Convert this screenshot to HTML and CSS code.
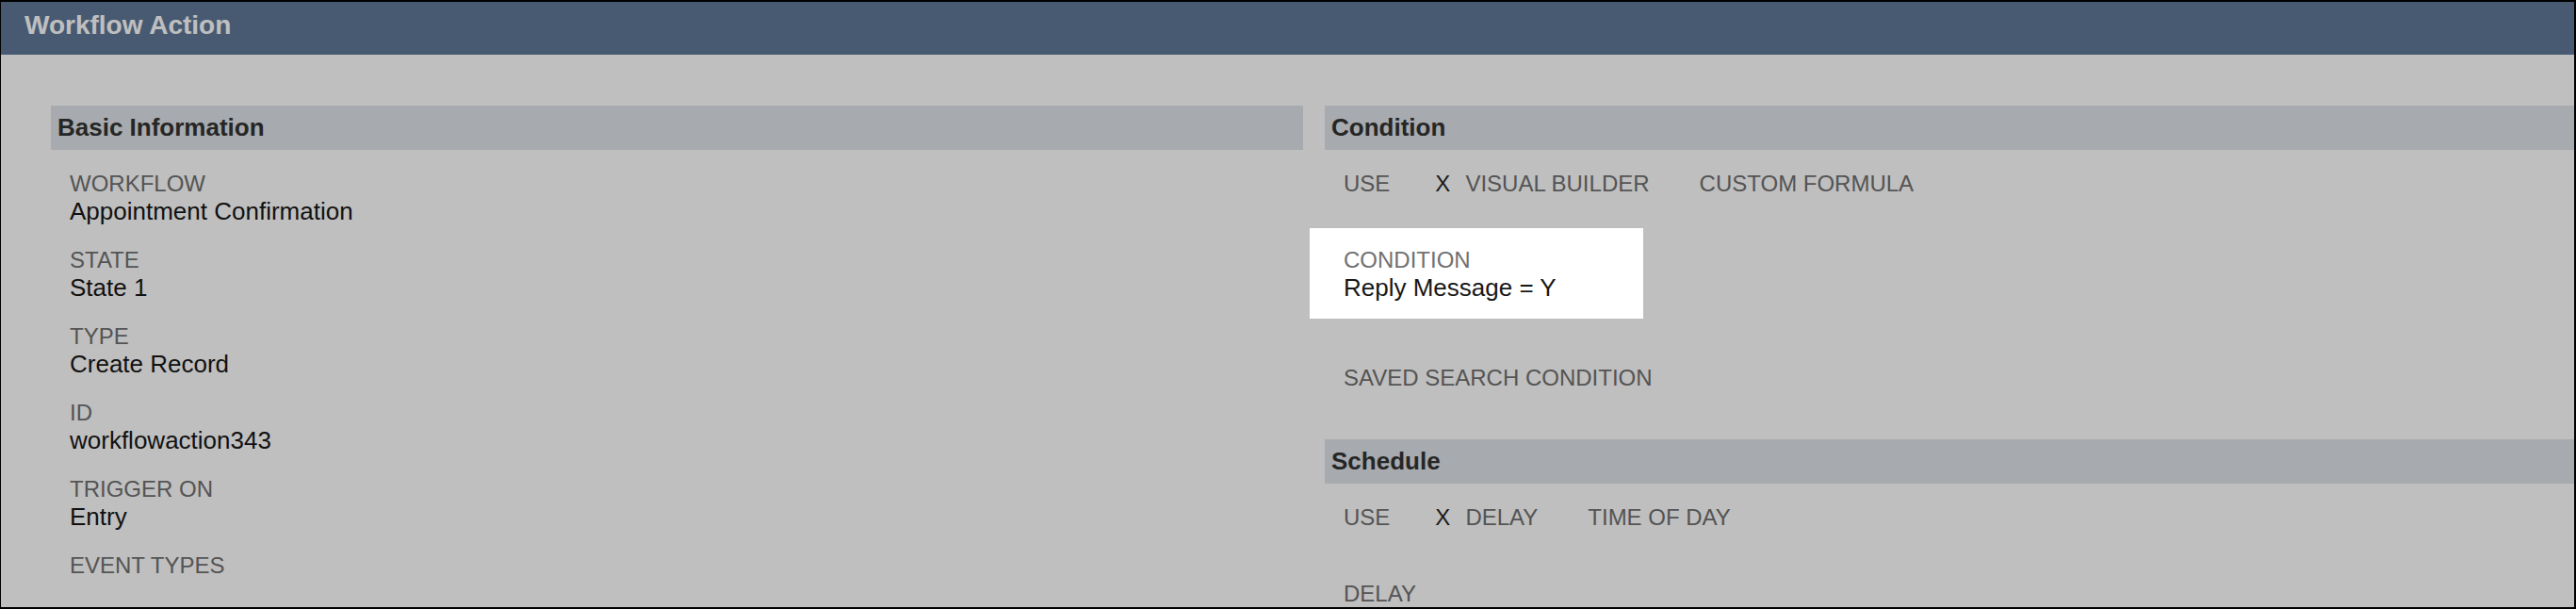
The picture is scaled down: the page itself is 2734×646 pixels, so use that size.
FILE: index.html
```html
<!DOCTYPE html>
<html lang="en">
<head>
    <meta charset="UTF-8">
    <meta name="viewport" content="width=device-width, initial-scale=1.0">
    <title>Workflow Action</title>
    <link rel="stylesheet" href="styles.css">
</head>
<body>
    <div class="frame">
        <div class="page-header">
            <h1>Workflow Action</h1>
        </div>

        <div class="columns">
            <section class="panel">
                <h2 class="panel-title">Basic Information</h2>
                <div class="fields">
                    <div class="field">
                        <div class="label">WORKFLOW</div>
                        <div class="value">Appointment Confirmation</div>
                    </div>
                    <div class="field">
                        <div class="label">STATE</div>
                        <div class="value">State 1</div>
                    </div>
                    <div class="field">
                        <div class="label">TYPE</div>
                        <div class="value">Create Record</div>
                    </div>
                    <div class="field">
                        <div class="label">ID</div>
                        <div class="value">workflowaction343</div>
                    </div>
                    <div class="field">
                        <div class="label">TRIGGER ON</div>
                        <div class="value">Entry</div>
                    </div>
                    <div class="field">
                        <div class="label">EVENT TYPES</div>
                        <div class="value"></div>
                    </div>
                </div>
            </section>

            <div class="column">
                <section class="panel">
                    <h2 class="panel-title">Condition</h2>
                    <div class="fields">
                        <div class="field">
                            <div class="label options">
                                <span class="options-name">USE</span>
                                <span class="option"><span class="mark">X</span>VISUAL BUILDER</span>
                                <span class="option">CUSTOM FORMULA</span>
                            </div>
                            <div class="value"></div>
                        </div>
                        <!-- highlighted field, the rest of the page is dimmed around it -->
                        <div class="field spotlight">
                            <div class="label">CONDITION</div>
                            <div class="value">Reply Message = Y</div>
                        </div>
                        <div class="field">
                            <div class="label">SAVED SEARCH CONDITION</div>
                            <div class="value"></div>
                        </div>
                    </div>
                </section>

                <section class="panel">
                    <h2 class="panel-title">Schedule</h2>
                    <div class="fields">
                        <div class="field">
                            <div class="label options">
                                <span class="options-name">USE</span>
                                <span class="option"><span class="mark">X</span>DELAY</span>
                                <span class="option">TIME OF DAY</span>
                            </div>
                            <div class="value"></div>
                        </div>
                        <div class="field">
                            <div class="label">DELAY</div>
                            <div class="value"></div>
                        </div>
                    </div>
                </section>
            </div>
        </div>
    </div>
</body>
</html>
```

FILE: styles.css
```css
* {
    margin: 0;
    padding: 0;
    box-sizing: border-box;
}
body {
    font-family: "Liberation Sans", Arial, Helvetica, sans-serif;
    background: #000;
    overflow: hidden;
}
.frame {
    height: 100vh;
    border-style: solid;
    border-color: #000;
    border-width: 2px 2px 2px 1px;
    background: #fff;
    overflow: hidden;
}
.page-header {
    height: 56px;
    padding-left: 25px;
    background: #5f7899;
}
.page-header h1 {
    font-size: 28px;
    line-height: 50px;
    font-weight: bold;
    color: #fff;
}
.columns {
    display: grid;
    grid-template-columns: 1329px 1329px;
    column-gap: 23px;
    align-items: start;
    margin-top: 54px;
    padding-left: 53px;
}
.panel-title {
    height: 47px;
    padding-left: 7px;
    background: #dfe3e8;
    color: #333;
    font-size: 26px;
    line-height: 47px;
    font-weight: bold;
}
.fields {
    display: flex;
    flex-direction: column;
    gap: 22px;
    padding: 22px 20px 20px;
}
.label {
    font-size: 24px;
    line-height: 28px;
    color: #717171;
    white-space: nowrap;
}
.value {
    min-height: 31px;
    font-size: 26px;
    line-height: 31px;
    color: #171717;
}
.options {
    display: flex;
}
.options-name {
    margin-right: 48px;
}
.option + .option {
    margin-left: 53px;
}
.mark {
    margin-right: 16px;
    color: #262626;
}
.spotlight {
    position: relative;
    z-index: 1;
    width: 354px;
    margin: -20px 0 27px -36px;
    padding: 20px 0 17px 36px;
    background: #fff;
    box-shadow: 0 0 0 3000px rgba(0, 0, 0, 0.25);
}
```
